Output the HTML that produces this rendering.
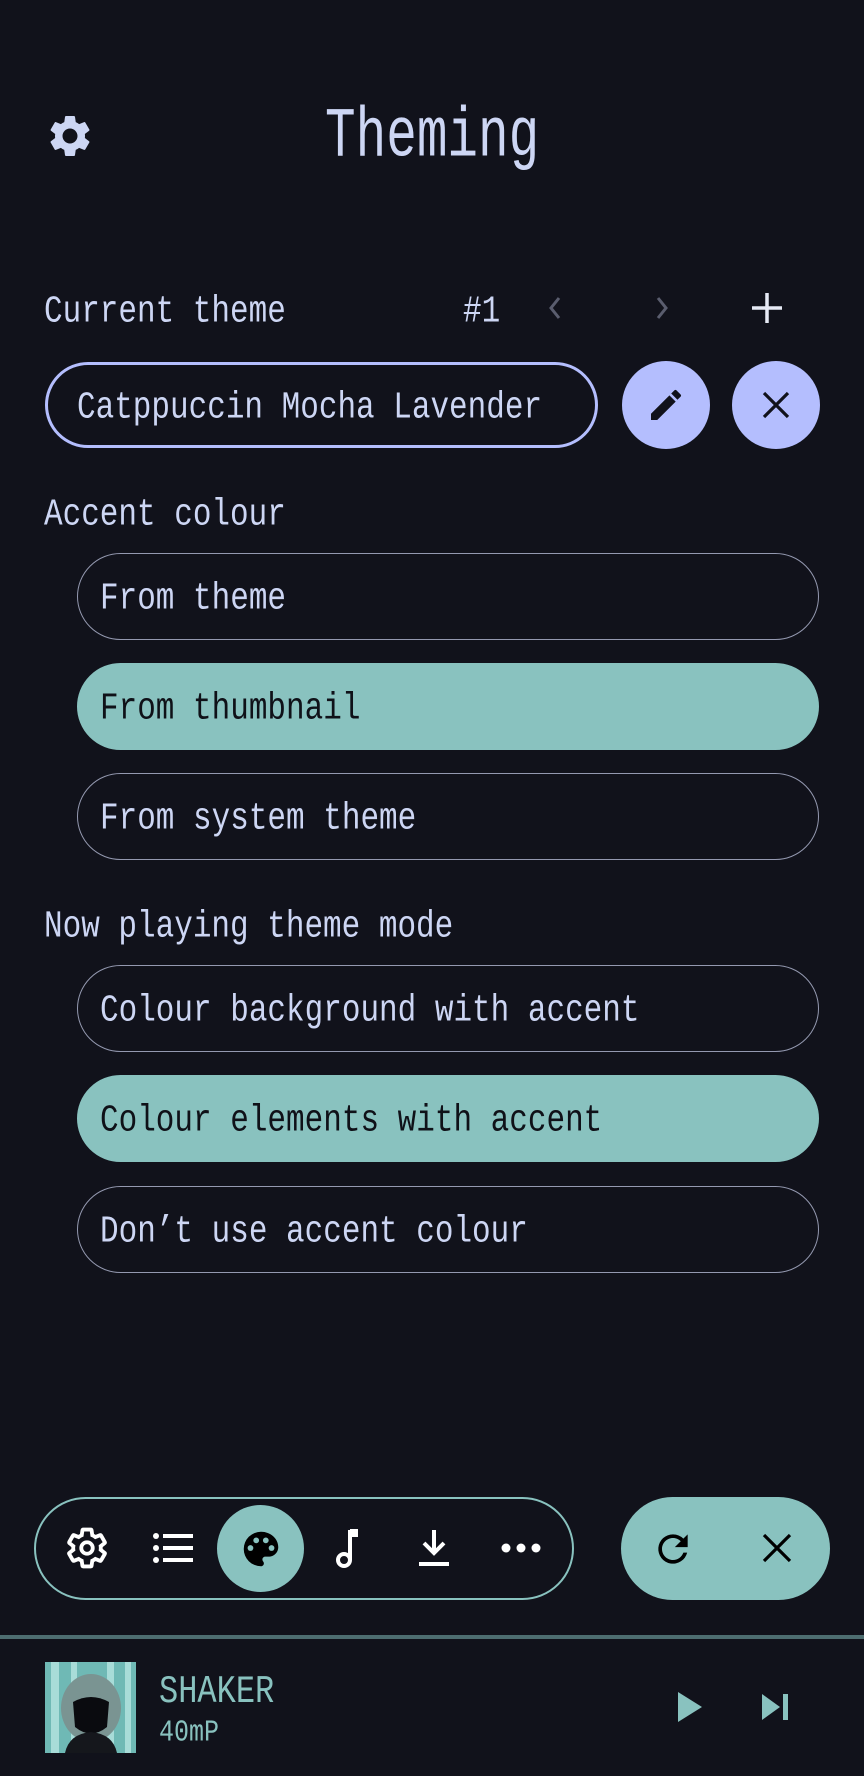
<!DOCTYPE html>
<html><head><meta charset="utf-8"><style>
*{margin:0;padding:0;box-sizing:border-box}
body{width:864px;height:1776px;background:#11121b;position:relative;overflow:hidden;font-family:"Liberation Mono",monospace;color:#cdd6f4}
.t{position:absolute;white-space:nowrap;font-size:31px;line-height:40px;transform:scaleY(1.22);transform-origin:left center}
.btn{position:absolute;left:77px;width:742px;height:87px;border:1.5px solid #9499b0;border-radius:44px}
.btn.on{background:#89c2bf;border-color:#89c2bf}
.btn span{position:absolute;left:22px;top:26px;font-size:31px;line-height:40px;transform:scaleY(1.22);transform-origin:left center;white-space:nowrap}
.btn.on span{color:#0f1118}
svg{position:absolute}
</style></head><body>
<svg style="left:45px;top:111px" width="50" height="50" viewBox="0 0 24 24"><path fill="#cdd6f4" d="M19.14 12.94c.04-.3.06-.61.06-.94 0-.32-.02-.64-.07-.94l2.03-1.580a.49.49 0 0 0 .12-.61l-1.92-3.32a.488.488 0 0 0-.59-.22l-2.39.96c-.5-.38-1.03-.7-1.62-.94l-.36-2.54a.484.484 0 0 0-.48-.41h-3.84c-.24 0-.43.17-.47.41l-.36 2.54c-.59.24-1.13.57-1.62.94l-2.39-.96c-.22-.08-.47 0-.59.22L2.74 8.87c-.12.21-.08.47.12.61l2.03 1.58c-.05.3-.09.63-.09.94s.02.64.07.94l-2.03 1.58a.49.49 0 0 0-.12.61l1.92 3.32c.12.22.37.29.59.22l2.39-.96c.5.38 1.03.7 1.62.94l.36 2.54c.05.24.24.41.48.41h3.84c.24 0 .44-.17.47-.41l.36-2.54c.59-.24 1.13-.56 1.62-.94l2.39.96c.22.08.47 0 .59-.22l1.92-3.32c.12-.22.07-.47-.12-.61l-2.01-1.58zM12 15.6c-1.98 0-3.6-1.62-3.6-3.6s1.62-3.6 3.6-3.6 3.6 1.62 3.6 3.6-1.62 3.6-3.6 3.6z"/></svg>
<div class="t" style="left:325px;top:109px;font-size:51px;line-height:60px;transform:scaleY(1.38)">Theming</div>

<div class="t" style="left:44px;top:293px">Current theme</div>
<div class="t" style="left:463px;top:293px">#1</div>
<svg style="left:543px;top:293px" width="24" height="30" viewBox="0 0 24 30"><path d="M16 5 L8 15 L16 25" stroke="#5a5d6e" stroke-width="3" fill="none"/></svg>
<svg style="left:650px;top:293px" width="24" height="30" viewBox="0 0 24 30"><path d="M8 5 L16 15 L8 25" stroke="#5a5d6e" stroke-width="3" fill="none"/></svg>
<svg style="left:750px;top:291px" width="34" height="34" viewBox="0 0 34 34"><path d="M17 2V32M2 17H32" stroke="#e6e9f5" stroke-width="3.5"/></svg>

<div style="position:absolute;left:45px;top:362px;width:553px;height:86px;border:3.5px solid #b4befe;border-radius:43px"></div>
<div class="t" style="left:77px;top:389px">Catppuccin Mocha Lavender</div>
<div style="position:absolute;left:622px;top:361px;width:88px;height:88px;border-radius:50%;background:#b4befe"></div>
<svg style="left:646px;top:385px" width="40" height="40" viewBox="0 0 24 24"><path fill="#11121b" d="M3 17.25V21h3.75L17.81 9.94l-3.75-3.75L3 17.25zM20.71 7.04a1 1 0 0 0 0-1.41l-2.34-2.34a1 1 0 0 0-1.41 0l-1.830 1.83 3.75 3.75 1.83-1.83z"/></svg>
<div style="position:absolute;left:732px;top:361px;width:88px;height:88px;border-radius:50%;background:#b4befe"></div>
<svg style="left:760px;top:389px" width="32" height="32" viewBox="0 0 32 32"><path d="M4 4L28 28M28 4L4 28" stroke="#11121b" stroke-width="3.2"/></svg>

<div class="t" style="left:44px;top:496px">Accent colour</div>
<div class="btn" style="top:553px"><span>From theme</span></div>
<div class="btn on" style="top:663px"><span>From thumbnail</span></div>
<div class="btn" style="top:773px"><span>From system theme</span></div>

<div class="t" style="left:44px;top:908px">Now playing theme mode</div>
<div class="btn" style="top:965px"><span>Colour background with accent</span></div>
<div class="btn on" style="top:1075px"><span>Colour elements with accent</span></div>
<div class="btn" style="top:1186px"><span>Don’t use accent colour</span></div>

<div style="position:absolute;left:34px;top:1497px;width:540px;height:103px;border:2px solid #89c2bf;border-radius:52px"></div>
<svg style="left:64px;top:1525px" width="46" height="46" viewBox="0 0 24 24"><path fill="none" stroke="#fff" stroke-width="2" d="M19.14 12.94c.04-.3.06-.61.06-.94 0-.32-.02-.64-.07-.94l2.03-1.58a.49.49 0 0 0 .12-.61l-1.92-3.32a.488.488 0 0 0-.59-.22l-2.39.96c-.5-.38-1.03-.7-1.62-.94l-.36-2.54a.484.484 0 0 0-.48-.41h-3.84c-.24 0-.43.17-.47.41l-.36 2.54c-.59.24-1.13.57-1.62.94l-2.39-.96c-.22-.08-.47 0-.59.22L2.74 8.87c-.12.21-.08.47.12.61l2.03 1.58c-.05.3-.09.63-.09.94s.02.64.07.94l-2.03 1.58a.49.49 0 0 0-.12.61l1.92 3.32c.12.22.37.29.59.22l2.39-.96c.5.38 1.03.7 1.62.94l.36 2.54c.05.24.24.41.48.41h3.84c.24 0 .44-.17.47-.41l.36-2.54c.59-.24 1.13-.56 1.62-.94l2.39.96c.22.08.47 0 .59-.22l1.92-3.32c.12-.22.07-.47-.12-.61l-2.01-1.58z"/><circle cx="12" cy="12" r="3" fill="none" stroke="#fff" stroke-width="2"/></svg>
<svg style="left:151px;top:1528px" width="44" height="40" viewBox="0 0 44 40"><g fill="#fff"><circle cx="5" cy="8" r="3"/><circle cx="5" cy="20" r="3"/><circle cx="5" cy="32" r="3"/><rect x="12" y="6" width="30" height="4"/><rect x="12" y="18" width="30" height="4"/><rect x="12" y="30" width="30" height="4"/></g></svg>
<div style="position:absolute;left:217px;top:1505px;width:87px;height:87px;border-radius:50%;background:#89c2bf"></div>
<svg style="left:238px;top:1526px" width="46" height="46" viewBox="0 0 24 24"><path fill="#000" d="M12 3a9 9 0 0 0 0 18c.83 0 1.5-.67 1.5-1.5 0-.39-.15-.74-.39-1.01-.23-.26-.38-.61-.38-.99 0-.83.67-1.5 1.5-1.5H16c2.76 0 5-2.24 5-5 0-4.42-4.03-8-9-8z"/><g fill="#89c2bf"><circle cx="6.5" cy="11.5" r="1.5"/><circle cx="9.5" cy="7.5" r="1.5"/><circle cx="14.5" cy="7.5" r="1.5"/><circle cx="17.5" cy="11.5" r="1.5"/></g></svg>
<svg style="left:330px;top:1526px" width="36" height="44" viewBox="0 0 36 44"><path d="M20 4V34" stroke="#fff" stroke-width="4"/><rect x="20" y="3" width="8" height="8" fill="#fff"/><circle cx="14" cy="34" r="6" fill="none" stroke="#fff" stroke-width="4"/></svg>
<svg style="left:416px;top:1526px" width="36" height="44" viewBox="0 0 36 44"><path d="M18 4V26M8 17L18 27L28 17" stroke="#fff" stroke-width="4" fill="none"/><rect x="3" y="36" width="30" height="4" fill="#fff"/></svg>
<svg style="left:500px;top:1538px" width="42" height="20" viewBox="0 0 42 20"><g fill="#fff"><circle cx="6" cy="10" r="4.5"/><circle cx="21" cy="10" r="4.5"/><circle cx="36" cy="10" r="4.5"/></g></svg>

<div style="position:absolute;left:621px;top:1497px;width:209px;height:103px;border-radius:52px;background:#89c2bf"></div>
<svg style="left:651px;top:1527px" width="44" height="44" viewBox="0 0 24 24"><path fill="#000" d="M17.65 6.35A7.958 7.958 0 0 0 12 4a8 8 0 1 0 7.73 10h-2.08A5.99 5.99 0 0 1 12 18c-3.31 0-6-2.69-6-6s2.69-6 6-6c1.66 0 3.14.69 4.22 1.78L13 11h7V4l-2.35 2.35z"/></svg>
<svg style="left:761px;top:1532px" width="32" height="32" viewBox="0 0 32 32"><path d="M3 3L29 29M29 3L3 29" stroke="#000" stroke-width="3.2"/></svg>

<div style="position:absolute;left:0;top:1635px;width:864px;height:4px;background:#4d6d70"></div>

<svg style="left:45px;top:1662px" width="91" height="91" viewBox="0 0 91 91"><rect width="91" height="91" fill="#6fb9b5"/><g fill="#a8dcd8"><rect x="6" width="8" height="91"/><rect x="26" width="6" height="91"/><rect x="62" width="7" height="91"/><rect x="80" width="6" height="91"/></g><ellipse cx="46" cy="46" rx="30" ry="34" fill="#7a9492"/><path d="M28 40Q46 30 64 40L62 65Q46 78 30 65Z" fill="#0a0b0f"/><path d="M20 91Q24 72 46 70Q68 72 72 91Z" fill="#15171c"/></svg>
<div class="t" style="left:159px;top:1672px;color:#89c2bf;font-size:32px">SHAKER</div>
<div class="t" style="left:159px;top:1717px;color:#89c2bf;font-size:25px;line-height:32px">40mP</div>
<svg style="left:676px;top:1690px" width="28" height="34" viewBox="0 0 28 34"><path d="M2 2L26 17L2 32Z" fill="#89c2bf"/></svg>
<svg style="left:760px;top:1693px" width="32" height="28" viewBox="0 0 32 28"><path d="M2 1L20 14L2 27Z" fill="#89c2bf"/><rect x="23" y="1" width="5" height="26" fill="#89c2bf"/></svg>
</body></html>
